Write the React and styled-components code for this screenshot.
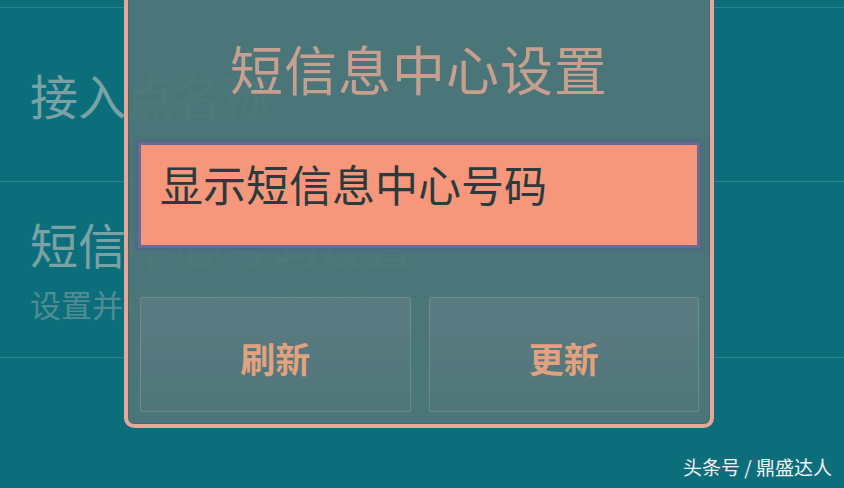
import React from "react";
import styled, { createGlobalStyle } from "styled-components";

const GlobalStyle = createGlobalStyle`
  html, body {
    margin: 0;
    padding: 0;
    background: #0d6e7b;
  }
  * {
    box-sizing: border-box;
  }
`;

const Screen = styled.div`
  position: relative;
  width: 844px;
  height: 488px;
  overflow: hidden;
  background: #0d6e7b;
  font-family: "Noto Sans CJK SC", "Noto Sans", sans-serif;
`;

const List = styled.div`
  display: flex;
  flex-direction: column;
  padding-top: 7px;
`;

const Row = styled.div`
  display: flex;
  flex-direction: column;
  justify-content: center;
  height: ${(p) => p.h}px;
  padding-left: 30px;
  border-top: 1px solid #2b8390;
`;

const RowTitle = styled.div`
  font-size: 48px;
  line-height: 1.2;
  color: #7aa2a5;
  white-space: nowrap;
`;

const RowSub = styled.div`
  font-size: 31px;
  line-height: 1.3;
  margin-top: 12px;
  color: #4f8d94;
  white-space: nowrap;
`;

const Dialog = styled.div`
  position: absolute;
  left: 124px;
  top: -8px;
  width: 590px;
  height: 436px;
  display: flex;
  flex-direction: column;
  border: 4px solid #e6a796;
  border-radius: 0 0 10px 10px;
  background: rgba(78, 118, 121, 0.965);
  box-shadow: inset 0 0 0 1px #3f6a70;
`;

const Title = styled.div`
  height: 146px;
  display: flex;
  align-items: center;
  justify-content: center;
  padding-bottom: 2px;
  font-size: 53px;
  color: #c69f8e;
  letter-spacing: 1px;
`;

const Field = styled.div`
  margin: 0 10px 0 10px;
  height: 106px;
  padding: 13px 0 0 19px;
  background: #f6977b;
  border: 3px solid #6a6a96;
  box-shadow: 0 0 4px 2px rgba(80, 90, 140, 0.6);
  font-size: 43px;
  line-height: 1.2;
  color: #2b3a3c;
`;

const Buttons = styled.div`
  margin-top: 49px;
  padding: 0 11px 0 12px;
  display: grid;
  grid-template-columns: 1fr 1fr;
  gap: 18px;
`;

const Button = styled.div`
  height: 115px;
  display: flex;
  align-items: center;
  justify-content: center;
  padding-top: 5px;
  background: linear-gradient(#5b7b82, #4f767a);
  border: 1px solid #6f8b8e;
  border-radius: 2px;
  font-size: 35px;
  font-weight: bold;
  color: #e2a27f;
`;

const Watermark = styled.div`
  position: absolute;
  right: 12px;
  bottom: 8px;
  font-size: 19px;
  color: #f2f2f2;
  font-family: "Noto Sans CJK SC", sans-serif;
`;

export default function App() {
  return (
    <>
      <GlobalStyle />
      <Screen>
        <List>
          <Row h={174}>
            <RowTitle>接入点名称</RowTitle>
          </Row>
          <Row h={176}>
            <RowTitle>短信中心号码设置</RowTitle>
            <RowSub>设置并查看短信中心号码</RowSub>
          </Row>
          <Row h={140} />
        </List>
        <Dialog>
          <Title>短信息中心设置</Title>
          <Field>显示短信息中心号码</Field>
          <Buttons>
            <Button>刷新</Button>
            <Button>更新</Button>
          </Buttons>
        </Dialog>
        <Watermark>头条号 / 鼎盛达人</Watermark>
      </Screen>
    </>
  );
}
